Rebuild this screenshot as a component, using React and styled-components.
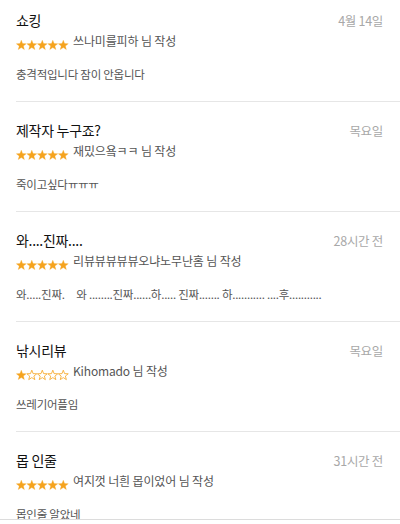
import React from "react";
import styled, { createGlobalStyle } from "styled-components";

const Global = createGlobalStyle`
  html, body { margin: 0; padding: 0; background: #fff; }
  body { font-family: "Noto Sans CJK KR", "Noto Sans", sans-serif; -webkit-font-smoothing: antialiased; }
`;

const List = styled.div`
  display: flex;
  flex-direction: column;
  padding-left: 16px;
  margin-top: -8px;
`;

const Item = styled.div`
  display: flex;
  flex-direction: column;
  height: 110px;
  box-sizing: border-box;
  padding: 17px 17px 0 0;
  border-bottom: 1px solid #e6e6e6;
`;

const Head = styled.div`
  display: flex;
  justify-content: space-between;
  align-items: center;
  height: 22px;
`;

const Title = styled.div`
  font-size: 14px;
  color: #111;
  letter-spacing: -0.3px;
`;

const DateText = styled.div`
  font-size: 12.5px;
  color: #a8a8a8;
  letter-spacing: -0.3px;
`;

const Meta = styled.div`
  display: flex;
  align-items: flex-end;
  gap: 4px;
  margin-top: 3px;
  height: 18px;
`;

const StarRow = styled.svg`
  display: block;
  margin-bottom: 1px;
  flex: none;
`;

const Author = styled.div`
  font-size: 12px;
  color: #555;
  letter-spacing: -0.15px;
  line-height: 18px;
  margin-bottom: 2px;
`;

const Body = styled.div`
  font-size: 11.5px;
  color: #555;
  letter-spacing: -0.25px;
  margin-top: 14px;
  white-space: pre;
  line-height: 16px;
`;

const BottomBar = styled.div`
  position: fixed;
  left: 0;
  right: 0;
  top: 519px;
  height: 5px;
  background: #fff;
  border-top: 1px solid #dcdcdc;
`;

const starPath = (cx) => {
  const pts = [];
  const R = 5.2, r = 2.2, cy = 5.4;
  for (let i = 0; i < 10; i++) {
    const a = -Math.PI / 2 + (i * Math.PI) / 5;
    const rad = i % 2 === 0 ? R : r;
    pts.push(`${(cx + rad * Math.cos(a)).toFixed(2)},${(cy + rad * Math.sin(a)).toFixed(2)}`);
  }
  return pts.join(" ");
};

function Stars({ count }) {
  return (
    <StarRow width="53" height="11" viewBox="0 0 53 11">
      {[0, 1, 2, 3, 4].map((i) => (
        <polygon
          key={i}
          points={starPath(5.3 + i * 10.5)}
          fill={i < count ? "#f5a31e" : "none"}
          stroke="#f5a31e"
          strokeWidth={i < count ? 0.3 : 0.8}
          strokeLinejoin="round"
        />
      ))}
    </StarRow>
  );
}

const reviews = [
  { title: "쇼킹", date: "4월 14일", stars: 5, author: "쓰나미를피하", body: "충격적입니다 잠이 안옵니다" },
  { title: "제작자 누구죠?", date: "목요일", stars: 5, author: "재밌으욬ㅋㅋ", body: "죽이고싶다ㅠㅠㅠ" },
  {
    title: "와....진짜....",
    date: "28시간 전",
    stars: 5,
    author: "리뷰뷰뷰뷰뷰오냐노무난홈",
    body: "와.....진짜.     와 ........진짜......하..... 진짜....... 하........... ....후...........",
  },
  { title: "낚시리뷰", date: "목요일", stars: 1, author: "Kihomado", body: "쓰레기어플임" },
  { title: "몹 인줄", date: "31시간 전", stars: 5, author: "여지껏 너흰 몹이었어", body: "몹인줄 알았네" },
];

export default function App() {
  return (
    <>
      <Global />
      <List>
        {reviews.map((r, i) => (
          <Item key={i}>
            <Head>
              <Title>{r.title}</Title>
              <DateText>{r.date}</DateText>
            </Head>
            <Meta>
              <Stars count={r.stars} />
              <Author>{r.author} 님 작성</Author>
            </Meta>
            <Body>{r.body}</Body>
          </Item>
        ))}
      </List>
      <BottomBar />
    </>
  );
}
